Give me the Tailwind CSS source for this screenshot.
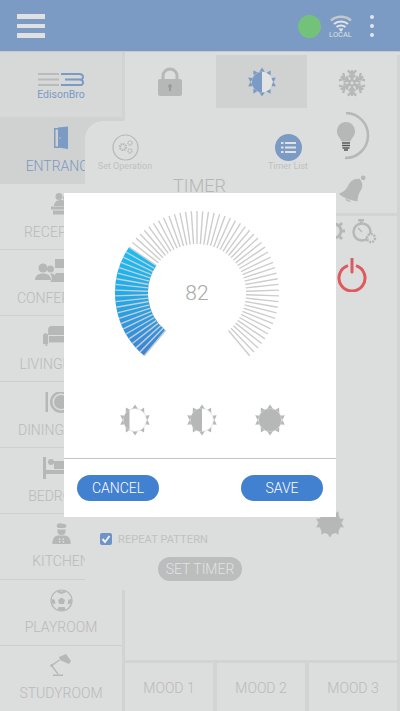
<!DOCTYPE html>
<html>

<head>
  <meta charset="UTF-8">
  <meta name="viewport" content="width=device-width, initial-scale=1.0">
  <script src="https://cdn.jsdelivr.net/npm/@tailwindcss/browser@4"></script>
</head>

<body>
  <!-- shared sun rays and snowflake arm -->
  <svg width="0" height="0" class="absolute">
    <defs>
      <g id="rays">
        <path d="M16 0.500l3 4.500h-6z" />
        <path d="M25.100 3.500l0.200 5.400-5-2.200z" />
        <path d="M30.700 11.200l-2.200 4.900-3.200-4.300z" />
        <path d="M30.700 20.800l-5.400 -0.600 3.200-4.300z" />
        <path d="M25.100 28.500l-4.800-2.700 5-2.200z" />
        <path d="M16 31.500l-3-4.500h6z" />
        <path d="M6.900 28.500l-0.200-5.400 5 2.200z" />
        <path d="M1.300 20.800l2.200-4.900 3.200 4.300z" />
        <path d="M1.300 11.200l5.400 0.600-3.200 4.300z" />
        <path d="M6.900 3.500l4.800 2.700-5 2.200z" />
      </g>
      <path id="arm" d="M15 12V1M10.500 1.500L15 6l4.500-4.500M11.500 6.500L15 10l3.500-3.500" />
    </defs>
  </svg>

  <div class="relative w-[400px] h-[711px] overflow-hidden bg-[#dcdddd] flex flex-col font-['Roboto',sans-serif]">

    <!-- header -->
    <div class="h-[52px] shrink-0 bg-[#7b9ac4] flex items-center pl-[17px] pr-[26px]">
      <div class="flex flex-col gap-[5px]">
        <div class="w-[28px] h-[4.500px] bg-[#dfe1e3]"></div>
        <div class="w-[28px] h-[4.500px] bg-[#dfe1e3]"></div>
        <div class="w-[28px] h-[4.500px] bg-[#dfe1e3]"></div>
      </div>
      <div class="ml-auto w-[23px] h-[23px] rounded-full bg-[#74c27a]"></div>
      <div class="ml-[8px] w-[24px] flex flex-col items-center mt-[2px]">
        <svg width="22" height="17" viewBox="0 0 22 17" fill="none">
          <path d="M1 5.500C6.500 0.500 15.500 0.500 21 5.500" stroke="#c4c7cb" stroke-width="2.400" />
          <path d="M4 9C8 5.500 14 5.500 18 9" stroke="#e3e5e7" stroke-width="2" />
          <path d="M6.500 12C9 10 13 10 15.500 12" stroke="#e3e5e7" stroke-width="2" />
          <path d="M8.500 13.500h5L11 17z" fill="#e3e5e7" />
        </svg>
        <span class="text-[7.500px] leading-[8px] text-[#dfe1e3] -mt-[1px]">LOCAL</span>
      </div>
      <div class="ml-[17px] flex flex-col gap-[4.500px]">
        <div class="w-[4.500px] h-[4.500px] rounded-full bg-[#e3e5e7]"></div>
        <div class="w-[4.500px] h-[4.500px] rounded-full bg-[#e3e5e7]"></div>
        <div class="w-[4.500px] h-[4.500px] rounded-full bg-[#e3e5e7]"></div>
      </div>
    </div>

    <div class="flex-1 flex min-h-0 border-t-[1px] border-[#c6cad0] -mt-[1px]">
      <!-- sidebar -->
      <div class="w-[125px] shrink-0 border-r-[3px] border-[#d2d3d3] flex flex-col text-[14px] font-light text-[#b9baba]">
        <div class="h-[65px] shrink-0 bg-[#d7d8d8] flex flex-col items-center pt-[20px]">
          <svg width="48" height="16" viewBox="0 0 48 16" fill="none">
            <path d="M1 2h21M1 7.500h21M1 13h21" stroke="#b9bbbc" stroke-width="2" />
            <path d="M24 2h18q4 0 4 3t-4 2.500h-14M42 7.500q4 0 4 3t-4 2.500H24" stroke="#7b9ac4" stroke-width="2" />
          </svg>
          <span class="text-[#7b9ac4] text-[10.500px] font-normal leading-[12px] mt-[1px]">EdisonBro</span>
        </div>

        <div class="h-[67px] shrink-0 bg-[#d0d1d1] flex flex-col items-center pt-[9px] text-[#7b9ac4]">
          <svg width="16" height="24" viewBox="0 0 16 24" fill="#7b9ac4">
            <path d="M1 2h5v1.500H2.500v17H6V22H1z" />
            <path d="M5 1.500l10-1v22.500l-10-1.500z" />
            <circle cx="7" cy="12" r="0.700" fill="#d0d1d1" />
          </svg>
          <span class="leading-[16px] mt-[8px]">ENTRANCE</span>
        </div>

        <div class="h-[66px] shrink-0 border-b border-[#cfd0d0] flex flex-col items-center pt-[8px]">
          <svg width="24" height="24" viewBox="0 0 24 24" fill="#b6b7b7">
            <circle cx="10" cy="4.500" r="3.500" />
            <circle cx="16" cy="6" r="2" />
            <path d="M5 14c0-4 3-6 7-6s7 2 7 6z" />
            <path d="M2 14.500h20v3H2zM4 18.500h16v4H4z" />
          </svg>
          <span class="leading-[16px] mt-[8px]">RECEPTION</span>
        </div>

        <div class="h-[66px] shrink-0 border-b border-[#cfd0d0] flex flex-col items-center pt-[8px]">
          <svg width="52" height="24" viewBox="0 0 52 24" fill="#b6b7b7">
            <circle cx="8" cy="10" r="4.500" />
            <path d="M0 22c0-4 3-6.500 8-6.500s8 2.500 8 6.500z" />
            <circle cx="15.500" cy="11" r="3.500" />
            <path d="M16 15.500c3 0 4 2 4.500 3.500l-2.500 3h-1c0-3-0.500-5-2-6z" />
            <path d="M20 1h14v9H20z" />
            <path d="M15 24l6-9h16v9z" />
          </svg>
          <span class="leading-[16px] mt-[8px]">CONFERENCE</span>
        </div>

        <div class="h-[66px] shrink-0 border-b border-[#cfd0d0] flex flex-col items-center pt-[9px]">
          <svg width="36" height="22" viewBox="0 0 42 24" preserveAspectRatio="none" fill="#b6b7b7">
            <path d="M6 5q0-4 4-4h22q4 0 4 4v6H6z" />
            <path d="M0 12q0-3 3-3t3 3v9H1q-1 0-1-1z" />
            <path d="M7 12h28v7H7z" />
            <path d="M36 12q0-3 3-3t3 3v8q0 1-1 1h-5z" />
            <path d="M3 21h2v2H3zM37 21h2v2h-2z" />
          </svg>
          <span class="leading-[16px] mt-[9px]">LIVINGROOM</span>
        </div>

        <div class="h-[66px] shrink-0 border-b border-[#cfd0d0] flex flex-col items-center pt-[10px]">
          <svg width="32" height="22" viewBox="0 0 32 22">
            <path d="M0.500 0h2.500v20H0.500z" fill="#b6b7b7" />
            <circle cx="16" cy="10" r="11" fill="#b6b7b7" />
            <circle cx="16" cy="10" r="8.500" fill="#dcdddd" />
            <circle cx="16" cy="10" r="7" fill="#b6b7b7" />
          </svg>
          <span class="leading-[16px] mt-[8px]">DININGROOM</span>
        </div>

        <div class="h-[66px] shrink-0 border-b border-[#cfd0d0] flex flex-col items-center pt-[9px]">
          <svg width="36" height="22" viewBox="0 0 36 22" fill="#b6b7b7">
            <path d="M0 0h3v22H0z" />
            <path d="M3 13h33v4H3zM31 17h3v3h-3z" />
            <circle cx="8" cy="5" r="3" />
            <path d="M11 4h25v8H11z" />
          </svg>
          <span class="leading-[16px] mt-[9px]">BEDROOM</span>
        </div>

        <div class="h-[66px] shrink-0 border-b border-[#cfd0d0] flex flex-col items-center pt-[9px]">
          <svg width="19" height="22" viewBox="0 0 20 24" fill="#b6b7b7">
            <path d="M5 1.500q2-1.500 5-1t5 1q1 2-1 4H6q-2-2-1-4z" />
            <path d="M5.500 7h9q0.500 6-4.500 6t-4.500-6z" />
            <path d="M0 23q0-9 6-9.500h8q6 0.500 6 9.500z" />
            <circle cx="8" cy="17.500" r="1" fill="#dcdddd" />
            <circle cx="12" cy="17.500" r="1" fill="#dcdddd" />
            <circle cx="8" cy="20.500" r="1" fill="#dcdddd" />
            <circle cx="12" cy="20.500" r="1" fill="#dcdddd" />
          </svg>
          <span class="leading-[16px] mt-[8px]">KITCHEN</span>
        </div>

        <div class="h-[66px] shrink-0 border-b border-[#cfd0d0] flex flex-col items-center pt-[9px]">
          <svg width="23" height="23" viewBox="0 0 23 23" fill="#b6b7b7">
            <circle cx="11.500" cy="11.500" r="10.500" fill="none" stroke="#b6b7b7" stroke-width="1.200" />
            <path d="M8 11l3.500-2.500L15 11l-1.200 4H9.200z" />
            <path d="M8 1.500l3.500 1 3.500-1 0.500 2-4 1.500-4-1.500zM1.500 10l3 0.500 1 3.500-1.500 1.500-2.500-2zM21.500 10l-3 0.500-1 3.500 1.500 1.500 2.500-2zM8.500 18h6l1 2.500-4 1.500-4-1.500z" />
          </svg>
          <span class="leading-[16px] mt-[7px]">PLAYROOM</span>
        </div>

        <div class="h-[66px] shrink-0 flex flex-col items-center pt-[8px]">
          <svg width="22" height="24" viewBox="0 0 22 24" fill="#b6b7b7">
            <path d="M9 3l7-3 5 7-2 3-9-4z" />
            <path d="M9.500 6L1.500 11.500l6.500 8.500" fill="none" stroke="#b6b7b7" stroke-width="1.300" />
            <path d="M3 20.500h10V22H3z" />
            <circle cx="1.800" cy="11.500" r="1.500" />
          </svg>
          <span class="leading-[16px] mt-[7px]">STUDYROOM</span>
        </div>
      </div>

      <!-- main -->
      <div class="flex-1 flex flex-col min-w-0">
        <div class="flex-1 flex pt-[3px] min-h-0">
          <div class="w-[182px] shrink-0 flex items-start">
            <div class="w-[90px] h-[53px] flex items-center justify-center">
              <svg width="24" height="30" viewBox="0 0 24 30" fill="#b6b7b7">
                <path d="M5 13V9a7 7 0 0 1 14 0v4" fill="none" stroke="#b6b7b7" stroke-width="3" />
                <rect x="0" y="12" width="24" height="17" rx="2" />
                <path d="M12 17a2 2 0 0 1 1 3.700V24h-2v-3.300A2 2 0 0 1 12 17z" fill="#9a9b9b" />
              </svg>
            </div>
            <div class="w-[91px] ml-[1px] h-[53px] bg-[#d0d1d1] flex items-center justify-center">
              <svg width="30" height="30" viewBox="0 0 32 32">
                <use href="#rays" fill="#7b9ac4" />
                <circle cx="16" cy="16" r="11" fill="#e2e3e3" />
                <path d="M16 5a11 11 0 0 0 0 22z" fill="#7b9ac4" />
              </svg>
            </div>
          </div>

          <div class="flex-1 border-r-[3px] border-[#d2d3d3] flex flex-col">
            <div class="h-[161px] shrink-0 border-b-[3px] border-[#d2d3d3] flex flex-col items-center relative z-20">
              <svg class="mt-[13px]" width="28" height="30" viewBox="0 0 30 30" fill="none" stroke="#b6b7b7" stroke-width="2.400">
                <use href="#arm" />
                <use href="#arm" transform="rotate(60 15 15)" />
                <use href="#arm" transform="rotate(120 15 15)" />
                <use href="#arm" transform="rotate(180 15 15)" />
                <use href="#arm" transform="rotate(240 15 15)" />
                <use href="#arm" transform="rotate(300 15 15)" />
                <circle cx="15" cy="15" r="2.800" />
              </svg>
              <svg class="absolute left-[30px] top-[57px]" width="34" height="50" viewBox="0 0 34 50" fill="none">
                <path d="M9 1a22.500 22.500 0 0 1 -1 45" stroke="#b6b7b7" stroke-width="2.500" />
                <path d="M9 10c-5 0-9 4-9 9.500 0 5 4 7 4.500 10h9c0.500-3 4.500-5 4.500-10C18 14 14 10 9 10z" fill="#b6b7b7" />
                <path d="M5 31h8M5 33.500h8M5.500 36h7M7 38h4" stroke="#555" stroke-width="1.300" />
              </svg>
              <svg class="absolute left-[31px] top-[119px]" width="28" height="32" viewBox="0 0 30 32" fill="#b6b7b7">
                <circle cx="27" cy="3" r="2.500" />
                <path d="M23 4c-6-1-10 3-12 7-2 5-5 7-10 9 4 4 14 8 20 8 0-4 1-8 3-11 3-4 3-9-1-13z" />
                <path d="M8 25a4 4 0 0 0 6 3z" />
              </svg>
            </div>
            <div class="flex-1 relative">
              <svg class="absolute left-[14px] top-[4px]" width="28" height="24" viewBox="0 0 28 24" fill="none" stroke="#b6b7b7" stroke-width="3">
                <circle cx="13" cy="11" r="7" />
                <path d="M13 0v4M13 18v4M2 11h4M20 11h4M5 3l3 3M18 16l3 3M21 3l-3 3M8 16l-3 3" />
              </svg>
              <svg class="absolute left-[45px] top-[3px]" width="25" height="25" viewBox="0 0 25 25" fill="none" stroke="#b6b7b7" stroke-width="2.500">
                <path d="M6 1h6M9 1v4" />
                <circle cx="10" cy="13" r="8.500" />
                <path d="M10 13L6 9" stroke-width="1.200" />
                <circle cx="19" cy="19" r="4" fill="#dcdddd" stroke-width="2.500" stroke-dasharray="2 1" />
              </svg>
              <svg class="absolute left-[30px] top-[42px]" width="30" height="34" viewBox="0 0 30 34" fill="none" stroke="#dd5a5e" stroke-width="3">
                <path d="M11 7.600a13 13 0 1 0 8 0" />
                <path d="M15 1v13" stroke-linecap="round" />
              </svg>
            </div>
          </div>
        </div>

        <div class="h-[51px] shrink-0 border-t-[3px] border-[#d2d3d3] bg-[#d2d3d3] grid grid-cols-3 gap-[4px] pr-[3px] text-[14px] font-light text-[#b9baba]">
          <div class="flex items-center justify-center pt-[2px] bg-[#dcdddd]">MOOD 1</div>
          <div class="flex items-center justify-center pt-[2px] bg-[#dcdddd]">MOOD 2</div>
          <div class="flex items-center justify-center pt-[2px] bg-[#dcdddd]">MOOD 3</div>
        </div>
      </div>
    </div>

    <!-- timer panel behind the dialog -->
    <div class="absolute left-[85px] top-[121px] w-[221px] h-[469px] bg-[#dcdddd] rounded-tl-[18px] text-[#c0c1c1] z-10">
      <div class="absolute left-0 top-[13px] w-[80px] flex flex-col items-center">
        <svg width="27" height="27" viewBox="0 0 27 27" fill="none" stroke="#b6b7b7">
          <circle cx="13.500" cy="13.500" r="12.500" stroke-width="1.200" />
          <circle cx="11" cy="13" r="3" stroke-width="2.200" stroke-dasharray="1.500 0.800" />
          <circle cx="18" cy="9" r="2" stroke-width="1.500" stroke-dasharray="1 0.600" />
          <circle cx="18" cy="17" r="2" stroke-width="1.500" stroke-dasharray="1 0.600" />
        </svg>
        <span class="text-[9px] leading-[11px]">Set Operation</span>
      </div>
      <div class="absolute left-[163px] top-[13px] w-[80px] flex flex-col items-center">
        <svg width="27" height="27" viewBox="0 0 27 27">
          <circle cx="13.500" cy="13.500" r="13.500" fill="#7b9ac4" />
          <path d="M6 8h2.500v2H6zM6 12.500h2.500v2H6zM6 17h2.500v2H6zM10 8h11v2H10zM10 12.500h11v2H10zM10 17h11v2H10z" fill="#dfe1e3" />
        </svg>
        <span class="text-[9px] leading-[11px]">Timer List</span>
      </div>
      <div class="absolute left-0 right-0 top-[54px] text-center text-[18px] font-light leading-[22px] text-[#b5b6b6] pl-[8px]">TIMER</div>
      <div class="absolute left-[15px] top-[411px] flex items-center gap-[6px]">
        <div class="w-[12px] h-[12px] rounded-[2px] bg-[#6f93c6] flex items-center justify-center">
          <svg width="10" height="10" viewBox="0 0 10 10" fill="none" stroke="#f0f1f1" stroke-width="2">
            <path d="M1.500 5l2.500 3 4.500-6" />
          </svg>
        </div>
        <span class="text-[11px] leading-[12px] tracking-[0.100px] mt-[2px]">REPEAT PATTERN</span>
      </div>
      <div class="absolute left-[73px] top-[436px] w-[84px] h-[24px] pt-[1px] rounded-full bg-[#bcbdbd] text-[#e2e3e3] text-[14px] font-light flex items-center justify-center">SET TIMER</div>
      <svg class="absolute left-[230px] top-[387px]" width="30" height="30" viewBox="0 0 32 32" fill="#b6b7b7">
        <use href="#rays" />
        <circle cx="16" cy="16" r="12" />
      </svg>
    </div>

    <!-- dialog -->
    <div class="absolute left-[64px] top-[193px] w-[272px] h-[324px] bg-white z-30 flex flex-col">
      <div class="relative h-[180px] shrink-0">
        <svg id="dial" class="absolute left-0 top-0" width="272" height="180" viewBox="0 0 272 180">
          <defs>
            <linearGradient id="blueGrad" gradientUnits="userSpaceOnUse" x1="0" y1="50" x2="0" y2="165">
              <stop offset="0" stop-color="#14c2f7" />
              <stop offset="0.500" stop-color="#22a8ea" />
              <stop offset="1" stop-color="#4080d4" />
            </linearGradient>
          </defs>
          <path id="dialValue" fill="none" stroke="url(#blueGrad)" stroke-width="33" />
          <g id="dialTicks" stroke="#cdcdcd" stroke-width="1.400"></g>
        </svg>
        <div class="absolute left-[103px] top-[86px] w-[60px] text-center text-[21px] leading-[28px] font-light text-[#aaaaaa]">82</div>
      </div>
      <div class="flex-1 relative">
        <svg class="absolute left-[55px] top-[31px]" width="32" height="32" viewBox="0 0 32 32">
          <use href="#rays" fill="#b6b7b7" />
          <circle cx="16" cy="16" r="11.500" fill="#fff" stroke="#cfcfcf" stroke-width="0.500" />
          <path d="M10.500 5.900a11.500 11.500 0 0 0 0 20.200z" fill="#b6b7b7" />
        </svg>
        <svg class="absolute left-[122px] top-[31px]" width="32" height="32" viewBox="0 0 32 32">
          <use href="#rays" fill="#b6b7b7" />
          <circle cx="16" cy="16" r="11.500" fill="#fff" stroke="#cfcfcf" stroke-width="0.500" />
          <path d="M16 4.500a11.500 11.500 0 0 0 0 23z" fill="#b6b7b7" />
        </svg>
        <svg class="absolute left-[190px] top-[31px]" width="32" height="32" viewBox="0 0 32 32">
          <use href="#rays" fill="#b6b7b7" />
          <circle cx="16" cy="16" r="11.500" fill="#b6b7b7" stroke="#dddddd" stroke-width="0.500" />
        </svg>
      </div>
      <div class="h-[59px] shrink-0 border-t border-[#c4c4c4] flex items-center justify-between px-[13px]">
        <div class="w-[82px] h-[26px] rounded-full bg-[#4280d0] text-white text-[14px] font-light flex items-center justify-center">CANCEL</div>
        <div class="w-[82px] h-[26px] rounded-full bg-[#4280d0] text-white text-[14px] font-light flex items-center justify-center">SAVE</div>
      </div>
    </div>
  </div>

  <script>
    // dial centre in dialog coordinates
    var cx = 133, cy = 100;
    function pt(r, deg) {
      var a = deg * Math.PI / 180;
      return [cx + r * Math.sin(a), cy - r * Math.cos(a)];
    }
    var ticks = document.getElementById("dialTicks");
    var count = 70;
    for (var i = 0; i <= count; i++) {
      var deg = -140 + 280 * i / count;
      var a = pt(49, deg), b = pt(82, deg);
      var line = document.createElementNS("http://www.w3.org/2000/svg", "line");
      line.setAttribute("x1", a[0]);
      line.setAttribute("y1", a[1]);
      line.setAttribute("x2", b[0]);
      line.setAttribute("y2", b[1]);
      ticks.appendChild(line);
    }
    var s = pt(65.5, -140), e = pt(65.5, -56);
    document.getElementById("dialValue").setAttribute("d", "M" + s[0] + " " + s[1] + "A65.500 65.500 0 0 1 " + e[0] + " " + e[1]);
  </script>
</body>

</html>
